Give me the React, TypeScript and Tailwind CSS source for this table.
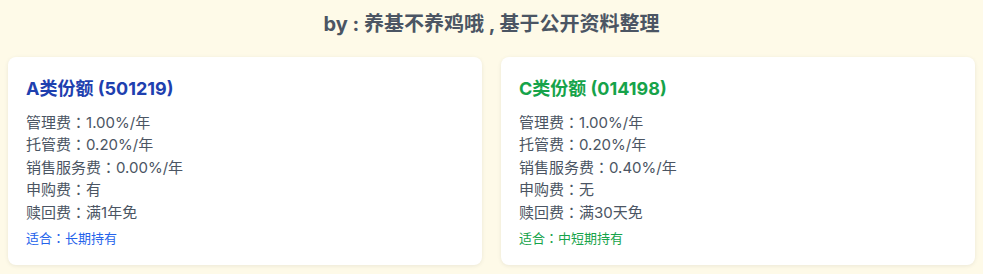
const shares = [
  {
    name: 'A类份额 (501219)',
    tone: 'text-[#1e40af]',
    hint: 'text-[#2563eb]',
    rows: [
      ['管理费', '1.00%/年'],
      ['托管费', '0.20%/年'],
      ['销售服务费', '0.00%/年'],
      ['申购费', '有'],
      ['赎回费', '满1年免'],
    ],
    fit: '长期持有',
  },
  {
    name: 'C类份额 (014198)',
    tone: 'text-[#16a34a]',
    hint: 'text-[#16a34a]',
    rows: [
      ['管理费', '1.00%/年'],
      ['托管费', '0.20%/年'],
      ['销售服务费', '0.40%/年'],
      ['申购费', '无'],
      ['赎回费', '满30天免'],
    ],
    fit: '中短期持有',
  },
];

// full-width colon, centered in its cell
function Colon() {
  return <span style={{ fontFamily: '"Noto Sans CJK TC", sans-serif' }}>：</span>;
}

export default function App() {
  return (
    <div
      className="min-h-[274px] bg-[#fefae8] px-2 pt-[9px] pb-2"
      style={{ fontFamily: 'Inter, "Noto Sans CJK SC", sans-serif' }}
    >
      <h2 className="text-center text-[20px] leading-[30px] font-bold text-[#4b5563]">
        by : 养基不养鸡哦 , 基于公开资料整理
      </h2>

      <div className="mt-[18px] grid grid-cols-2 gap-[19px]">
        {shares.map((s) => (
          <div
            key={s.name}
            className="h-[208px] rounded-lg bg-white p-[18px] shadow-[0_1px_4px_rgba(0,0,0,0.08)]"
          >
            <h3 className={`h-[27px] text-[18px] leading-[27px] font-bold ${s.tone}`}>{s.name}</h3>
            <ul className="mt-[9px] text-[15px] leading-[22.4px] text-[#4b5563]">
              {s.rows.map(([k, v]) => (
                <li key={k} className="h-[22.4px]">
                  {k}
                  <Colon />
                  {v}
                </li>
              ))}
            </ul>
            <p className={`mt-[5px] h-[19.5px] text-[13px] leading-[19.5px] ${s.hint}`}>
              适合
              <Colon />
              {s.fit}
            </p>
          </div>
        ))}
      </div>
    </div>
  );
}
